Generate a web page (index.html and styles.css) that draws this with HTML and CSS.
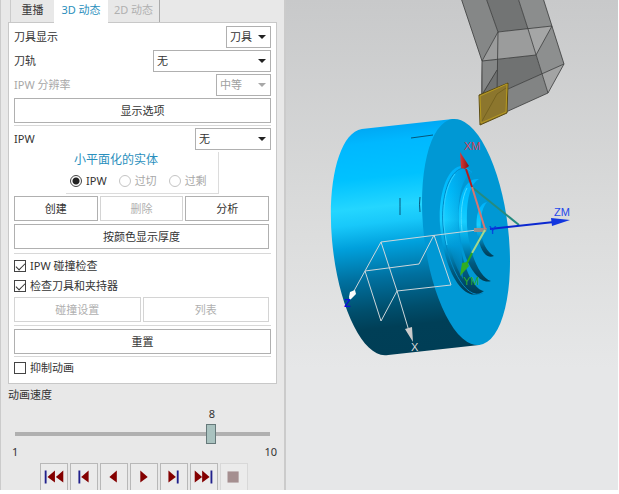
FILE: index.html
```
<!DOCTYPE html>
<html lang="zh-CN">
<head>
<meta charset="utf-8">
<title>3D 动态</title>
<link rel="stylesheet" href="styles.css">
</head>
<body>
<main class="app">
  <form class="panel">
    <div class="tabs" role="tablist">
      <button class="tab" type="button" role="tab">重播</button>
      <button class="tab tab-active" type="button" role="tab" aria-selected="true">3D 动态</button>
      <button class="tab tab-last" type="button" role="tab" disabled>2D 动态</button>
    </div>
    <div class="box">
      <div class="row">
        <label for="tool">刀具显示</label>
        <span class="pick pick-s"><select id="tool"><option>刀具</option></select></span>
      </div>
      <div class="row">
        <label for="path">刀轨</label>
        <span class="pick pick-l"><select id="path"><option>无</option></select></span>
      </div>
      <div class="row off">
        <label for="res">IPW 分辨率</label>
        <span class="pick pick-m"><select id="res" disabled><option>中等</option></select></span>
      </div>
      <button class="btn" type="button">显示选项</button>
      <hr class="tight">
      <div class="row">
        <label for="ipw">IPW</label>
        <span class="pick pick-n"><select id="ipw"><option>无</option></select></span>
      </div>
      <fieldset class="group">
        <legend>小平面化的实体</legend>
        <div class="radios">
          <label><input type="radio" name="body" checked>IPW</label>
          <label class="off"><input type="radio" name="body" disabled>过切</label>
          <label class="off"><input type="radio" name="body" disabled>过剩</label>
        </div>
      </fieldset>
      <div class="btns">
        <button class="btn" type="button">创建</button>
        <button class="btn" type="button" disabled>删除</button>
        <button class="btn" type="button">分析</button>
      </div>
      <div class="btns wide"><button class="btn" type="button">按颜色显示厚度</button></div>
      <hr>
      <label class="check"><input type="checkbox" checked>IPW 碰撞检查</label>
      <label class="check">
        <input type="checkbox" checked>检查刀具和夹持器</label>
      <div class="btns pair">
        <button class="btn" type="button" disabled>碰撞设置</button>
        <button class="btn" type="button" disabled>列表</button>
      </div>
      <hr>
      <button class="btn" type="button">重置</button>
      <hr class="tight">
      <label class="check"><input type="checkbox">抑制动画</label>
    </div>
    <div class="speed">
      <label for="speed">动画速度</label>
      <div class="slide">
        <output class="value" for="speed">8</output>
        <input id="speed" type="range" min="1" max="10" value="8">
      </div>
      <div class="ends"><span>1</span><span>10</span></div>
    </div>
    <div class="player">
      <button type="button" aria-label="到起点"><svg viewBox="0 0 28 28"><path class="bar" d="M4 7h2v14H4z"/><path d="M15 7v13l-8-6zM24 7v13l-8-6z"/></svg></button>
      <button type="button" aria-label="上一步"><svg viewBox="0 0 28 28"><path class="bar" d="M8 7h2v14H8z"/><path d="M19 7v13l-8-6z"/></svg></button>
      <button type="button" aria-label="反向播放"><svg viewBox="0 0 28 28"><path d="M17 7v13l-8-6z"/></svg></button>
      <button type="button" aria-label="播放"><svg viewBox="0 0 28 28"><path d="M10 7v13l8-6z"/></svg></button>
      <button type="button" aria-label="下一步"><svg viewBox="0 0 28 28"><path d="M8 7v13l8-6z"/><path class="bar" d="M17 7h2v14h-2z"/></svg></button>
      <button type="button" aria-label="到终点"><svg viewBox="0 0 28 28"><path d="M4 7v13l8-6zM12 7v13l8-6z"/><path class="bar" d="M21 7h2v14h-2z"/></svg></button>
      <button type="button" aria-label="停止" disabled><svg viewBox="0 0 28 28"><path class="stop" d="M7 8h12v12H7z"/></svg></button>
    </div>
  </form>
  <section class="view" aria-label="图形窗口">
    <svg class="scene" viewBox="286 0 332 490" preserveAspectRatio="xMinYMin slice">
      <defs>
        <linearGradient id="side" gradientUnits="userSpaceOnUse" x1="400" y1="124" x2="424" y2="351">
          <stop offset="0" stop-color="#00a8f4"/><stop offset=".07" stop-color="#00b8ff"/>
          <stop offset=".22" stop-color="#00c2ff"/><stop offset=".35" stop-color="#24d6ff"/>
          <stop offset=".42" stop-color="#18c8fa"/><stop offset=".52" stop-color="#00a0dc"/>
          <stop offset=".66" stop-color="#00709f"/><stop offset=".8" stop-color="#004e6c"/>
          <stop offset=".88" stop-color="#003f57"/><stop offset="1" stop-color="#003e56"/>
        </linearGradient>
        <linearGradient id="bore" x1="0" y1="0" x2="0" y2="1">
          <stop offset="0" stop-color="#00b0f8"/><stop offset=".2" stop-color="#00c0ff"/>
          <stop offset=".42" stop-color="#16ceff"/><stop offset=".62" stop-color="#009cd8"/>
          <stop offset=".82" stop-color="#005a80"/><stop offset="1" stop-color="#003c54"/>
        </linearGradient>
        <linearGradient id="wall" x1="0" y1="0" x2="1" y2="0">
          <stop offset="0" stop-color="#0098d8" stop-opacity="0"/><stop offset="1" stop-color="#0098d8"/>
        </linearGradient>
        <linearGradient id="red"><stop offset="0" stop-color="#d83a3a"/><stop offset="1" stop-color="#8c1010"/></linearGradient>
        <linearGradient id="grey"><stop offset="0" stop-color="#fff"/><stop offset="1" stop-color="#8a8a8a"/></linearGradient>
      </defs>

      <g class="holder">
        <path fill="#858787" d="M461-2L486-2 498 32 482 61z"/>
        <path fill="#727474" d="M486-2H518L528 29 498 32z"/>
        <path fill="#8b8d8d" d="M518-2H543L552 26 528 29z"/>
        <path fill="#9b9c9c" d="M498 32L528 29 536 55 482 61z"/>
        <path fill="#a5a6a6" d="M528 29L552 26 536 55z"/>
        <path fill="#8d8f8f" d="M552 26L564 64 542 74 536 55z"/>
        <path fill="#707272" d="M482 61L536 55 542 74 508 89 497 94 481 95z"/>
        <path fill="#858787" d="M482 61L498 60 497 70 481 95z"/>
        <path fill="#828484" d="M508 89L542 74 548 93 506 112z"/>
        <path fill="#a3a4a4" d="M542 74L564 64 548 93z"/>
        <path class="edge" d="M461-2L482 61V95M486-2L498 32 552 26M518-2L528 29 548 93 506 112M543-2L564 64 548 93M498 32L482 61 536 55 552 26M498 32L497 94M564 64L508 89M497 70L482 95"/>
        <path fill="#8c762d" stroke="#5d4d12" d="M479 95L508 83 507 113 480 125z"/>
        <path fill="none" stroke="#b79a20" d="M480 96L507 84 506 112 481 123z"/>
        <path class="crease" d="M506 88L497 94 482 121"/>
      </g>

      <path fill="url(#side)" d="M452.800 119.100L361.800 129.100C339 133 327 183 332 240C338 308 364 360 388.200 354.900L479.200 344.900z"/>
      <ellipse fill="#0098d4" cx="466" cy="232" rx="42.200" ry="113.700" transform="rotate(-6.750 466 232)"/>
      <path fill="none" stroke="#07557a" d="M411 138L433 135M400 198Q400 206 400 215M420 197Q419 204 420 212"/>

      <path fill="url(#bore)" d="M464 166C447 164 438 195 440 225C443 267 463 307 484 291C474 290 461 266 459 232C457 200 460 180 472 172z"/>
      <path fill="url(#wall)" d="M464 168C450 170 444 198 446 226C449 250 456 268 463 279L460 220C459 196 462 180 472 172z"/>
      <path fill="none" stroke="#0088c4" d="M463 168C448 171 441 199 443 225C446 262 465 302 483 293"/>
      <path fill="none" stroke="#32cfff" d="M455 174C445 187 443 206 444 225Q445 236 447 245"/>
      <path fill="url(#bore)" d="M479 179C464 177 457 200 459 226C461 257 477 286 491 281C480 278 469 254 467 226C466 200 470 184 479 179z"/>
      <path fill="none" stroke="#46dcff" d="M467 188C462 197 460 214 462 231"/>
      <path fill="url(#bore)" d="M487 202C479 203 475 216 477 232C479 247 485 260 494 256C487 252 482 243 481 231C480 217 482 208 487 202z"/>

      <g class="wire">
        <path d="M485 229L381 242 349 300M434 235L419 264 365 271 381 321 397 291 451 285 434 235M381 242L397 291 409 331"/>
      </g>
      <path fill="url(#grey)" d="M349 297L350 292 355 290 356 294 350 300zM405 329L412 327 413 342zM474 228L487 228 486 232 474 232z"/>

      <path class="axis" stroke="#258b80" d="M473 188L519 225"/>
      <path class="axis" stroke="#d8766f" d="M485 229L472 187"/>
      <path class="axis" stroke="#b51c1c" d="M472 187L466 169"/>
      <path fill="url(#red)" d="M460 152L469 166 465 169 461 168z"/>
      <path class="axis" stroke="#a4d88b" d="M485 230L472 253"/>
      <path class="axis" stroke="#27a71f" d="M472 253L466 265"/>
      <path fill="#32ad20" d="M460 276L462 263 467 262 469 266z"/>
      <path class="axis" stroke="#0b28d0" d="M490 229L554 222"/>
      <path fill="#1236df" d="M551 218L570 220 552 226z"/>

      <text x="464" y="150" fill="#cf4055">XM</text>
      <text x="554" y="216" fill="#2448ec">ZM</text>
      <text x="463" y="285" fill="#2ea82e">YM</text>
      <text x="489" y="234" fill="#0635e2">Y</text>
      <text class="bold" x="344" y="307" fill="#0b10d8">Z</text>
      <text x="411" y="351" fill="#dcdcdc">X</text>
    </svg>
  </section>
</main>
</body>
</html>
```

FILE: styles.css
```
* { box-sizing: border-box; }
body {
  margin: 0;
  background: #fff;
  color: #333;
  font: 11px/16px "Noto Sans", "Noto Sans CJK SC", sans-serif;
}
.app {
  display: grid;
  grid-template-columns: 286px 1fr;
  height: 100vh;
  padding: 0 1px 4px 0;
}
.panel {
  min-height: 0;
  overflow: hidden;
  padding: 0 7px;
  background: #e8e8e8;
  border: solid #cbcbcb;
  border-width: 0 2px 0 1px;
}
button, select { font: inherit; color: inherit; }

.tabs { display: flex; height: 22px; padding-left: 2px; }
.tab {
  width: 44px;
  padding: 0 0 3px;
  background: none;
  border: 0 solid #cbcbcb;
  border-left-width: 1px;
}
.tab-active {
  position: relative;
  width: 54px;
  height: 24px;
  padding-bottom: 5px;
  background: #fff;
  border: 0;
  color: #2a8fbd;
}
.tab-last { width: 52px; border-width: 0 1px 0 0; border-color: #aaa; }
.tab:disabled { color: #b0b0b0; }

.box {
  display: flex;
  flex-direction: column;
  gap: 2px;
  height: 362px;
  padding: 3px 5px;
  background: #fff;
  border: 1px solid #c8c8c8;
}
.row { display: flex; align-items: center; justify-content: space-between; }
.off { color: #a8a8a8; }
.pick { position: relative; display: block; height: 22px; }
.pick::after {
  content: "";
  position: absolute;
  right: 5px;
  top: 9px;
  border: solid transparent;
  border-width: 4px 4px 0;
  border-top-color: #222;
}
.off .pick::after { border-top-color: #a8a8a8; }
.pick select {
  appearance: none;
  width: 100%;
  height: 22px;
  padding: 0 3px;
  background: #fff;
  border: 1px solid #b0b0b0;
  border-radius: 0;
}
.pick select:disabled { color: #a0a0a0; opacity: 1; }
.pick-s { width: 45px; }
.pick-m { width: 55px; }
.pick-n { width: 76px; }
.pick-l { width: 118px; }
.btn {
  flex: none;
  height: 25px;
  padding: 0;
  background: #fff;
  border: 1px solid #b0b0b0;
}
.btn:disabled { color: #b0b0b0; border-color: #d4d4d4; }
hr { flex: none; width: 100%; height: 1px; margin: 1px 0; border: 0; background: #d8d8d8; }
.tight { margin: 0; }

.group {
  width: 153px;
  height: 42px;
  margin: 0 0 0 52px;
  padding: 0 0 0 4px;
  border: solid #dcdcdc;
  border-width: 0 1px 1px 0;
}
.group legend { float: left; width: 100%; padding: 0 0 0 4px; color: #2a8fbd; font-size: 12px; }
.radios { display: flex; clear: both; gap: 12px; padding-top: 5px; }
.radios label { display: flex; align-items: center; gap: 4px; }
input[type="radio"], input[type="checkbox"] { appearance: none; flex: none; width: 12px; height: 12px; margin: 0; background: #fff; border: 1px solid #444; }
input[type="radio"] { border-radius: 50%; }
input[type="radio"]:checked { background: radial-gradient(#222 0 3px, #fff 4px); }
input[type="radio"]:disabled { border-color: #c4c4c4; }
.check { display: flex; align-items: center; gap: 4px; height: 18px; }
input[type="checkbox"] { display: grid; place-items: center; }
input[type="checkbox"]:checked::before {
  content: "";
  width: 8px;
  height: 4px;
  margin-bottom: 2px;
  border: solid #333;
  border-width: 0 0 1px 1px;
  transform: rotate(-45deg);
}
.btns { display: grid; grid-template-columns: repeat(3, 1fr); gap: 2px; padding-right: 2px; }
.wide { grid-template-columns: 1fr; margin: 1px 0; }
.pair { grid-template-columns: 1fr 1fr; }

.speed > label { display: block; margin-top: 3px; }
.slide { display: flex; flex-direction: column; margin: 3px 7px 0 7px; }
.value { display: block; width: 11px; margin-left: 76%; }
#speed { appearance: none; width: 100%; height: 20px; margin: 2px 0 0; background: none; }
#speed::-webkit-slider-runnable-track { height: 4px; background: #b0b0b0; }
#speed::-webkit-slider-thumb {
  appearance: none;
  width: 10px;
  height: 20px;
  margin-top: -8px;
  background: #a9c2bf;
  border: 1px solid #66797a;
}
.ends { display: flex; justify-content: space-between; padding-left: 4px; }
.player { display: flex; gap: 2px; margin: 3px 0 0 32px; }
.player button {
  width: 28px;
  height: 28px;
  padding: 0;
  background: #ebebeb;
  border: 1px solid #b8b8b8;
}
.player button:disabled { border-color: #d8d8d8; }
.player svg { display: block; width: 26px; height: 26px; fill: #840000; }
.player .bar { fill: #20208c; }
.player .stop { fill: #a58f90; }

.view {
  min-height: 0;
  overflow: hidden;
  background: linear-gradient(#c8c9ca, #dcdddd 48%, #e6e7e8 75%, #e6e7e8);
}
.scene { display: block; width: 100%; height: 100%; }
.scene text { font: 11px "Liberation Sans", sans-serif; }
.scene .bold { font-weight: bold; }
.edge { fill: none; stroke: #393b3b; stroke-width: 1; opacity: .8; }
.crease { fill: none; stroke: #5d4d12; opacity: .5; }
.wire path { fill: none; stroke: #ccd6da; stroke-width: 1; }
.axis { fill: none; stroke-width: 2; }
```
